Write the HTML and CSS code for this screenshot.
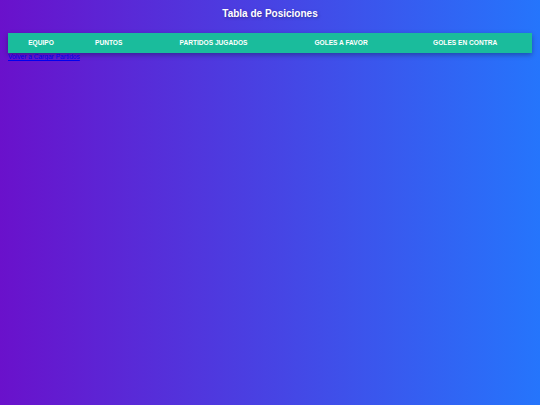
FILE: index.html
```html
<!DOCTYPE html>
<html lang="es">
<head>
<meta charset="utf-8">
<title>Tabla de Posiciones</title>
<link rel="stylesheet" href="styles.css">
</head>
<body>
<h1 class="title">Tabla de Posiciones</h1>
<table class="standings">
  <thead>
    <tr>
      <th>Equipo</th>
      <th>Puntos</th>
      <th>Partidos Jugados</th>
      <th>Goles a Favor</th>
      <th>Goles en Contra</th>
    </tr>
  </thead>
  <tbody></tbody>
</table>
<a class="reload" href="#">Volver a Cargar Partidos</a>
</body>
</html>
```
FILE: styles.css
```css
html, body {
  height: 100%;
}
body {
  margin: 0;
  padding: 8px;
  box-sizing: border-box;
  background: linear-gradient(to right, #6a11cb, #2575fc);
  font-family: "Liberation Sans", Arial, sans-serif;
  color: #fff;
}
.title {
  margin: 0 0 13px;
  font-size: 10px;
  line-height: 12px;
  text-align: center;
  font-weight: bold;
  color: #fff;
  text-shadow: 1px 1px 3px rgba(0, 0, 0, 0.35);
}
.standings {
  width: 100%;
  border-collapse: collapse;
  background: #1abc9c;
  box-shadow: 0 2px 5px rgba(0, 0, 0, 0.3);
}
.standings th {
  padding: 6px 6px;
  font-size: 6.6px;
  line-height: 8px;
  font-weight: bold;
  text-transform: uppercase;
  color: #fff;
  text-align: center;
}
.reload {
  display: block;
  width: fit-content;
  font-size: 6.6px;
  line-height: 8px;
  color: #0000ee;
}
```
